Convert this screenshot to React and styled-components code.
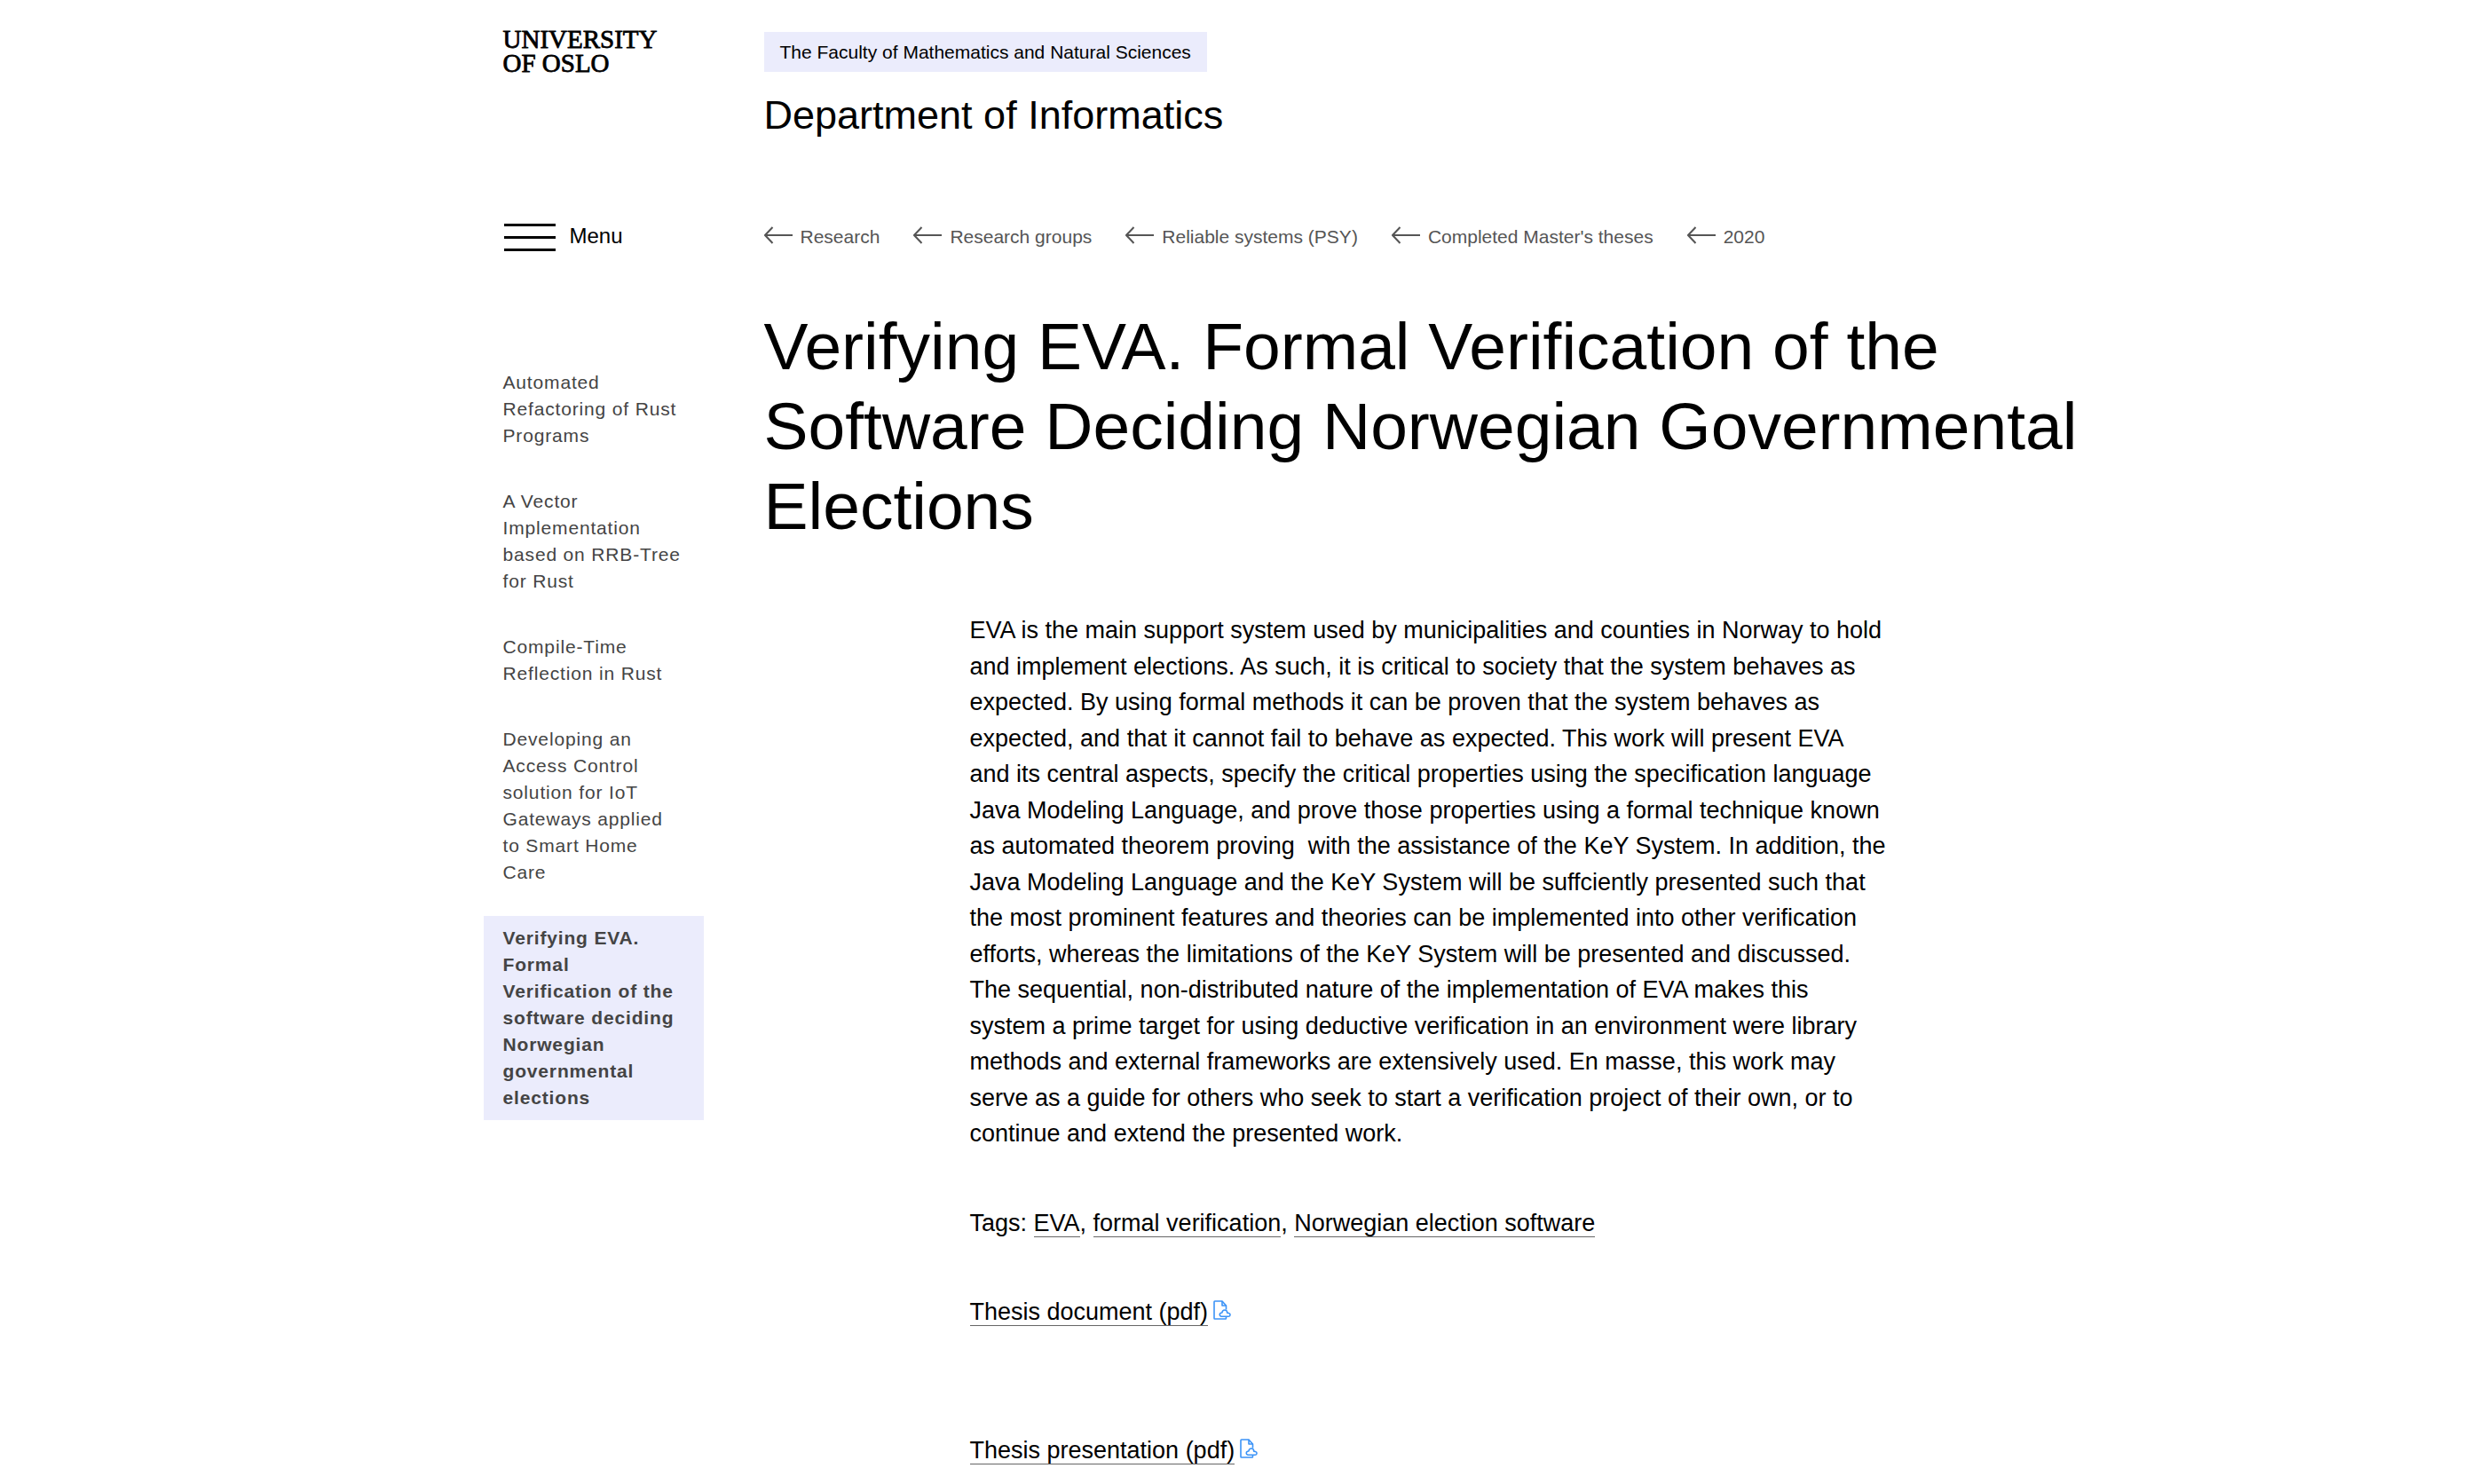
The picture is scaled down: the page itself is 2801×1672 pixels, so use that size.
import React from "react";
import styled, { createGlobalStyle } from "styled-components";

const GlobalStyle = createGlobalStyle`
  *, *::before, *::after { box-sizing: border-box; }
  body {
    margin: 0;
    background: #fff;
    color: #000;
    font-family: Arial, "Liberation Sans", sans-serif;
    font-size: 27px;
    line-height: 1.5;
  }
  a { color: inherit; text-decoration: none; }
`;

const Page = styled.div`
  max-width: 1920px;
  margin: 0 auto;
  padding: 36px 0 0 104px;
`;

const Columns = styled.div`
  display: grid;
  grid-template-columns: 248px minmax(0, 1fr);
  column-gap: 68px;
  align-items: start;
`;

const Header = styled(Columns)`
  min-height: 212px;
`;

const Logo = styled.a`
  padding-left: 22px;
  margin-top: -5px;
  font-family: "Liberation Serif", serif;
  font-size: 29px;
  line-height: 27px;
  -webkit-text-stroke: 0.8px #000;
`;

const Faculty = styled.a`
  display: inline-block;
  padding: 0 18px;
  background: #ebecfc;
  font-size: 21px;
  line-height: 45px;
`;

const Department = styled.a`
  display: block;
  margin-top: 19px;
  font-size: 45px;
  line-height: 60px;
`;

const NavRow = styled(Columns)`
  align-items: start;
`;

const MenuButton = styled.button`
  display: flex;
  align-items: center;
  gap: 16px;
  padding: 0 0 0 23px;
  border: 0;
  background: none;
  color: inherit;
  font: inherit;
  font-size: 24px;
  line-height: 36px;
  cursor: pointer;
`;

const Bars = styled.span`
  display: grid;
  gap: 11px;
  width: 58px;
  margin-top: 2px;
  &::before, &::after { content: ""; height: 3px; background: #000; }
  & > i { height: 3px; background: #000; }
`;

const Crumbs = styled.ol`
  display: flex;
  flex-wrap: wrap;
  gap: 38px;
  margin: 0;
  padding: 0;
  list-style: none;
`;

const Crumb = styled.a`
  display: flex;
  align-items: center;
  gap: 9px;
  color: #555;
  font-size: 21px;
  line-height: 38px;
  svg { margin-bottom: 4px; }
`;

const Main = styled(Columns)`
  padding-top: 59px;
`;

const SideList = styled.ul`
  display: grid;
  gap: 24px;
  margin: 0;
  padding: 61px 0 0;
  list-style: none;
`;

const SideLink = styled.a`
  display: block;
  padding: 10px 22px;
  background: ${(p) => (p.$current ? "#ebecfc" : "transparent")};
  color: #444;
  font-size: 21px;
  font-weight: ${(p) => (p.$current ? 700 : 400)};
  letter-spacing: 0.04em;
  line-height: 30px;
`;

const Title = styled.h1`
  max-width: 1500px;
  margin: 0;
  font-size: 75px;
  font-weight: 400;
  line-height: 90px;
`;

const Article = styled.div`
  max-width: 1036px;
  margin: 75px auto 0;
  p { margin: 0 0 60px; }
`;

const TextLink = styled.a`
  border-bottom: 1px solid #666;
`;

const FileLine = styled.p`
  && { margin-bottom: 115px; }
  &&:last-child { margin-bottom: 0; }
  svg { margin-left: 6px; }
`;

function Arrow() {
  return (
    <svg width="32" height="20" viewBox="0 0 32 20" fill="none" stroke="#555" strokeWidth="2" aria-hidden="true">
      <path d="M9.500 1 1 10l8.500 9M1 10H32" />
    </svg>
  );
}

function PdfIcon() {
  return (
    <svg width="20" height="22" viewBox="0 0 20 22" fill="none" stroke="#3b93f7" strokeWidth="1.6" strokeLinejoin="round" aria-hidden="true">
      <path d="M14.500 10.500V6L10 1H1.700q-.7 0-.7.7v18.600q0 .7.7.7h12.100q.7 0 .7-.7v-2" />
      <path d="M10 1v5h4.500" />
      <path d="M9.300 18.200h8c2.200 0 2.400-3.300.2-3.700l-1.700-.4c-.3-4-5.300-4.200-5.900-.1-3.400 0-3.400 4.200-.6 4.200z" />
    </svg>
  );
}

const crumbs = ["Research", "Research groups", "Reliable systems (PSY)", "Completed Master's theses", "2020"];

const theses = [
  "Automated Refactoring of Rust Programs",
  "A Vector Implementation based on RRB-Tree for Rust",
  "Compile-Time Reflection in Rust",
  "Developing an Access Control solution for IoT Gateways applied to Smart Home Care",
  "Verifying EVA. Formal Verification of the software deciding Norwegian governmental elections",
];

export default function App() {
  return (
    <>
      <GlobalStyle />
      <Page>
        <Header as="header">
          <Logo href="#">UNIVERSITY<br />OF OSLO</Logo>
          <div>
            <Faculty href="#">The Faculty of Mathematics and Natural Sciences</Faculty>
            <Department href="#">Department of Informatics</Department>
          </div>
        </Header>
        <NavRow>
          <MenuButton type="button"><Bars><i /></Bars>Menu</MenuButton>
          <nav aria-label="Breadcrumbs">
            <Crumbs>
              {crumbs.map((c) => (
                <li key={c}><Crumb href="#"><Arrow />{c}</Crumb></li>
              ))}
            </Crumbs>
          </nav>
        </NavRow>
        <Main>
          <nav aria-label="Theses">
            <SideList>
              {theses.map((t, i) => (
                <li key={t}>
                  <SideLink href="#" $current={i === theses.length - 1}>{t}</SideLink>
                </li>
              ))}
            </SideList>
          </nav>
          <main>
            <Title>Verifying EVA. Formal Verification of the Software Deciding Norwegian Governmental Elections</Title>
            <Article>
              <p>
                EVA is the main support system used by municipalities and counties in Norway to hold and implement
                elections. As such, it is critical to society that the system behaves as expected. By using formal
                methods it can be proven that the system behaves as expected, and that it cannot fail to behave as
                expected. This work will present EVA and its central aspects, specify the critical properties using
                the specification language Java Modeling Language, and prove those properties using a formal
                technique known as automated theorem proving&nbsp; with the assistance of the KeY System. In
                addition, the Java Modeling Language and the KeY System will be suffciently presented such that the
                most prominent features and theories can be implemented into other verification efforts, whereas the
                limitations of the KeY System will be presented and discussed. The sequential, non-distributed nature
                of the implementation of EVA makes this system a prime target for using deductive verification in an
                environment were library methods and external frameworks are extensively used. En masse, this work
                may serve as a guide for others who seek to start a verification project of their own, or to continue
                and extend the presented work.
              </p>
              <p>
                Tags: <TextLink href="#">EVA</TextLink>, <TextLink href="#">formal verification</TextLink>,{" "}
                <TextLink href="#">Norwegian election software</TextLink>
              </p>
              <FileLine><TextLink href="#">Thesis document (pdf)</TextLink><PdfIcon /></FileLine>
              <FileLine><TextLink href="#">Thesis presentation (pdf)</TextLink><PdfIcon /></FileLine>
            </Article>
          </main>
        </Main>
      </Page>
    </>
  );
}
